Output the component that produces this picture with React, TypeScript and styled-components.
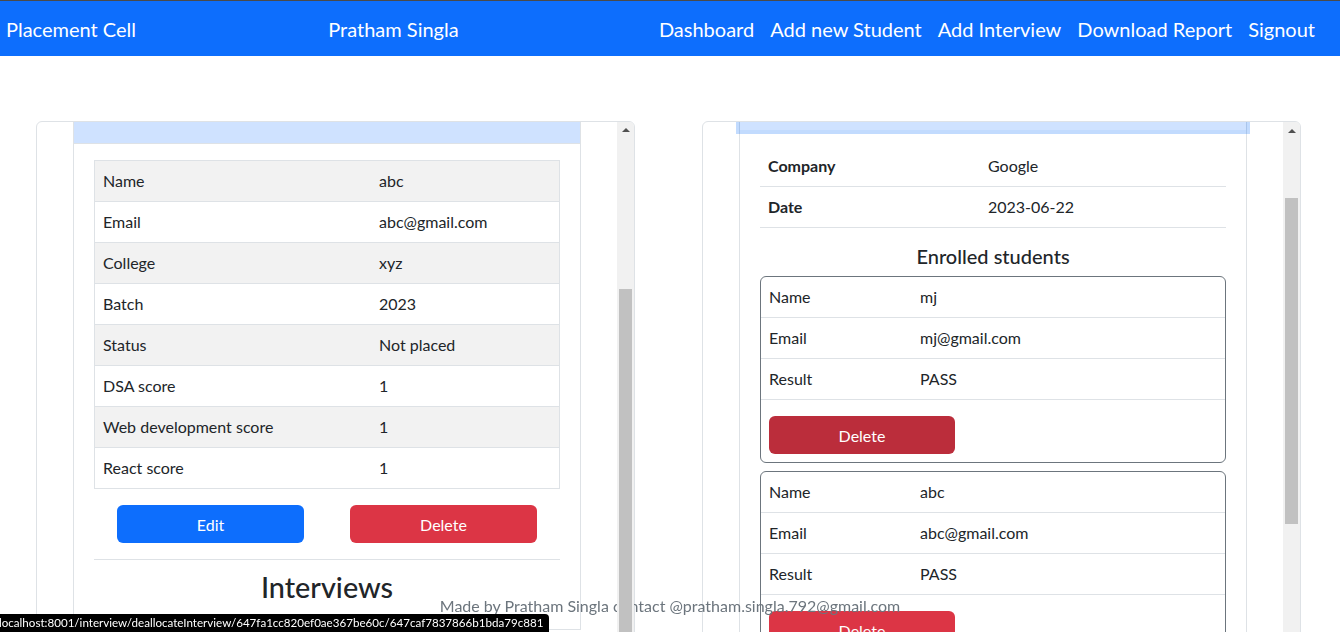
import React from 'react'
import styled, { createGlobalStyle } from 'styled-components'

const GlobalStyle = createGlobalStyle`
  body {
    margin: 0;
    font-family: Lato, "Liberation Sans", sans-serif;
    font-size: 16px;
    line-height: 1.5;
    color: #212529;
    background: #fff;
    overflow: hidden;
  }
`

const Navbar = styled.nav`
  display: flex;
  align-items: center;
  justify-content: space-between;
  height: 55px;
  padding: 0 17px 0 6px;
  border-top: 1px solid #4a4a4a;
  background: #0d6efd;
  color: #fff;
  font-size: 20px;
`

const Brand = styled.span`
  white-space: nowrap;
`

const NavLinks = styled.div`
  display: flex;
`

const NavLink = styled.a`
  padding: 0 8px;
  color: #fff;
  text-decoration: none;
  white-space: nowrap;
`

const Main = styled.main`
  display: grid;
  grid-template-columns: 599px 599px;
  column-gap: 67px;
  padding: 65px 0 0 36px;
`

const Panel = styled.section`
  display: flex;
  height: 560px;
  border: 1px solid #dee2e6;
  border-radius: 6px;
  overflow: hidden;
`

const Viewport = styled.div`
  flex: 1;
  min-width: 0;
  overflow: hidden;
`

// scrolled content, offset = how far the list is scrolled
const Scrolled = styled.div<{ $offset: number }>`
  margin-top: ${({ $offset }) => -$offset}px;
  padding: 0 36px;
`

const Scrollbar = styled.div`
  position: relative;
  z-index: 5;
  flex: none;
  width: 17px;
  display: flex;
  flex-direction: column;
  align-items: center;
  background: #f1f1f1;
`

const ArrowUp = styled.div`
  height: 17px;
  width: 100%;
  display: flex;
  align-items: center;
  justify-content: center;

  &::before {
    content: '';
    border-left: 4px solid transparent;
    border-right: 4px solid transparent;
    border-bottom: 4px solid #505050;
  }
`

const Thumb = styled.div<{ $top: number; $height: number }>`
  margin-top: ${({ $top }) => $top}px;
  width: 13px;
  height: ${({ $height }) => $height}px;
  background: #c1c1c1;
`

const AccordionItem = styled.div`
  border: 1px solid #dee2e6;
  background: #fff;
`

const AccordionButton = styled.button<{ $focused?: boolean }>`
  position: relative;
  z-index: ${({ $focused }) => ($focused ? 3 : 1)};
  display: flex;
  align-items: center;
  width: 100%;
  padding: 16px 20px;
  border: 0;
  background: #cfe2ff;
  color: #052c65;
  font-family: inherit;
  font-size: 16px;
  line-height: 24px;
  text-align: left;
  box-shadow: ${({ $focused }) =>
    $focused ? '0 0 0 4px rgba(13, 110, 253, 0.25)' : 'inset 0 -1px 0 #dee2e6'};

  svg {
    margin-left: auto;
    width: 20px;
    height: 20px;
    transform: rotate(-180deg);
  }
`

const AccordionBody = styled.div`
  padding: 16px 20px;
`

const InfoTable = styled.table<{ $bordered?: boolean; $striped?: boolean; $labelWidth: number }>`
  width: 100%;
  border-collapse: collapse;
  border: ${({ $bordered }) => ($bordered ? '1px solid #dee2e6' : '0')};
  margin: 0;

  td,
  th {
    padding: 8px;
    border-bottom: 1px solid #dee2e6;
    text-align: left;
    vertical-align: top;
  }

  th {
    font-weight: 700;
  }

  td:first-child,
  th:first-child {
    width: ${({ $labelWidth }) => $labelWidth - 16}px;
  }

  ${({ $striped }) => ($striped ? 'tr:nth-child(odd) td { background: #f2f2f2; }' : '')}
`

const ButtonRow = styled.div`
  display: flex;
  justify-content: space-around;
  margin-top: 16px;
`

const Button = styled.button<{ $variant: 'primary' | 'danger' | 'dangerHover' }>`
  width: 40%;
  height: 38px;
  border: 0;
  border-radius: 6px;
  color: #fff;
  font-family: inherit;
  font-size: 16px;
  background: ${({ $variant }) =>
    $variant === 'primary' ? '#0d6efd' : $variant === 'danger' ? '#dc3545' : '#bb2d3b'};
`

const Divider = styled.hr`
  margin: 16px 0 10px;
  border: 0;
  border-top: 1px solid #dee2e6;
`

const SectionTitle = styled.h3`
  margin: 0 0 8px;
  font-size: 28.8px;
  font-weight: 500;
  line-height: 1.2;
  text-align: center;
`

const DetailsTable = styled(InfoTable)`
  margin-bottom: 16px;
`

const SubTitle = styled.h5`
  margin: 0 0 8px;
  font-size: 20px;
  font-weight: 500;
  line-height: 1.2;
  text-align: center;
`

const StudentCard = styled.div`
  margin-bottom: 8px;
  border: 1px solid #6c757d;
  border-radius: 6px;
  overflow: hidden;
`

const CardActions = styled.div`
  padding: 16px 8px 8px;

  ${Button} {
    width: 186px;
  }
`

const Footer = styled.footer`
  position: fixed;
  left: 0;
  right: 0;
  bottom: 14px;
  z-index: 4;
  text-align: center;
  color: #6c757d;
  pointer-events: none;
`

const StatusBubble = styled.div`
  position: fixed;
  left: 0;
  bottom: 0;
  z-index: 10;
  height: 18px;
  padding: 0 6px 0 0;
  background: #000;
  color: #fff;
  font-size: 11.6px;
  line-height: 18px;
  text-indent: -1px;
  border-top-right-radius: 4px;
  white-space: nowrap;
`

const Chevron = () => (
  <svg viewBox="0 0 16 16" fill="#052c65">
    <path
      fillRule="evenodd"
      d="M1.646 4.646a.5.5 0 0 1 .708 0L8 10.293l5.646-5.647a.5.5 0 0 1 .708.708l-6 6a.5.5 0 0 1-.708 0l-6-6a.5.5 0 0 1 0-.708z"
    />
  </svg>
)

const studentInfo = [
  ['Name', 'abc'],
  ['Email', 'abc@gmail.com'],
  ['College', 'xyz'],
  ['Batch', '2023'],
  ['Status', 'Not placed'],
  ['DSA score', '1'],
  ['Web development score', '1'],
  ['React score', '1'],
]

const enrolled = [
  { name: 'mj', email: 'mj@gmail.com', result: 'PASS', hovered: true },
  { name: 'abc', email: 'abc@gmail.com', result: 'PASS', hovered: false },
]

export default function App() {
  return (
    <>
      <GlobalStyle />
      <Navbar>
        <Brand>Placement Cell</Brand>
        <Brand>Pratham Singla</Brand>
        <NavLinks>
          <NavLink href="#">Dashboard</NavLink>
          <NavLink href="#">Add new Student</NavLink>
          <NavLink href="#">Add Interview</NavLink>
          <NavLink href="#">Download Report</NavLink>
          <NavLink href="#">Signout</NavLink>
        </NavLinks>
      </Navbar>

      <Main>
        <Panel>
          <Viewport>
            <Scrolled $offset={35}>
              <AccordionItem>
                <AccordionButton>
                  Abc
                  <Chevron />
                </AccordionButton>
                <AccordionBody>
                  <InfoTable $bordered $striped $labelWidth={276}>
                    <tbody>
                      {studentInfo.map(([label, value]) => (
                        <tr key={label}>
                          <td>{label}</td>
                          <td>{value}</td>
                        </tr>
                      ))}
                    </tbody>
                  </InfoTable>
                  <ButtonRow>
                    <Button $variant="primary">Edit</Button>
                    <Button $variant="danger">Delete</Button>
                  </ButtonRow>
                  <Divider />
                  <SectionTitle>Interviews</SectionTitle>
                </AccordionBody>
              </AccordionItem>
            </Scrolled>
          </Viewport>
          <Scrollbar>
            <ArrowUp />
            <Thumb $top={151} $height={420} />
          </Scrollbar>
        </Panel>

        <Panel>
          <Viewport>
            <Scrolled $offset={49}>
              <AccordionItem>
                <AccordionButton $focused>
                  Google
                  <Chevron />
                </AccordionButton>
                <AccordionBody>
                  <DetailsTable $labelWidth={220}>
                    <tbody>
                      <tr>
                        <th>Company</th>
                        <td>Google</td>
                      </tr>
                      <tr>
                        <th>Date</th>
                        <td>2023-06-22</td>
                      </tr>
                    </tbody>
                  </DetailsTable>
                  <SubTitle>Enrolled students</SubTitle>
                  {enrolled.map((s) => (
                    <StudentCard key={s.email}>
                      <InfoTable $labelWidth={151}>
                        <tbody>
                          <tr>
                            <td>Name</td>
                            <td>{s.name}</td>
                          </tr>
                          <tr>
                            <td>Email</td>
                            <td>{s.email}</td>
                          </tr>
                          <tr>
                            <td>Result</td>
                            <td>{s.result}</td>
                          </tr>
                        </tbody>
                      </InfoTable>
                      <CardActions>
                        <Button $variant={s.hovered ? 'dangerHover' : 'danger'}>Delete</Button>
                      </CardActions>
                    </StudentCard>
                  ))}
                </AccordionBody>
              </AccordionItem>
            </Scrolled>
          </Viewport>
          <Scrollbar>
            <ArrowUp />
            <Thumb $top={59} $height={326} />
          </Scrollbar>
        </Panel>
      </Main>

      <Footer>Made by Pratham Singla contact @pratham.singla.792@gmail.com</Footer>
      <StatusBubble>
        localhost:8001/interview/deallocateInterview/647fa1cc820ef0ae367be60c/647caf7837866b1bda79c881
      </StatusBubble>
    </>
  )
}
